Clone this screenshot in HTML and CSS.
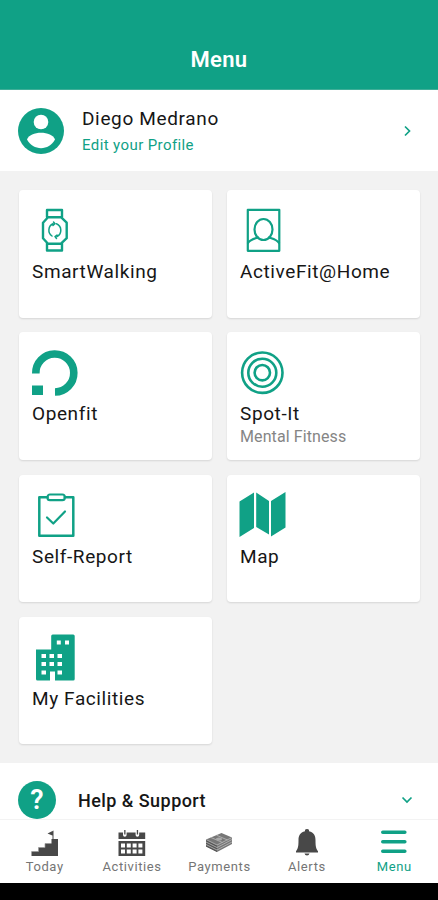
FILE: index.html
```html
<!DOCTYPE html>
<html lang="en">
<head>
    <meta charset="UTF-8">
    <meta name="viewport" content="width=device-width, initial-scale=1.0">
    <title>Menu</title>
    <link rel="stylesheet" href="styles.css">
</head>
<body>
    <header class="header"><h1>Menu</h1></header>

    <a class="profile">
        <svg class="avatar" viewBox="0 0 46 46">
            <circle cx="23" cy="23" r="23" fill="#10a186"/>
            <circle cx="23" cy="14" r="7.3" fill="#fff"/>
            <path d="M9 31.500C12 22.500 34 22.500 37 31.500C31 43 15 43 9 31.500z" fill="#fff"/>
        </svg>
        <div class="profile-text">
            <div class="name">Diego Medrano</div>
            <div class="edit">Edit your Profile</div>
        </div>
        <svg class="chevron" viewBox="0 0 12 12"><path d="M4 1.500l4.500 4.500L4 10.500"/></svg>
    </a>

    <main class="grid">
        <div class="card">
            <svg class="icon line" viewBox="0 0 46 46">
                <path d="M15 9V2h15v7M15 35.500v7h15v-7" stroke-width="2.400"/>
                <path d="M16 9.200h13l5.700 5.500v15.500L29 35.700H16l-5-5.500V14.700z" stroke-width="2.400"/>
                <path d="M21 15.800A7 7 0 0 0 20 28M24.500 15.800A7 7 0 0 1 25 28.500M21.500 14l1.500 1.800-2 1.700M24.500 30.500l-1.500-2 2-1.500" stroke-width="1.500"/>
            </svg>
            <div class="title">SmartWalking</div>
        </div>
        <div class="card">
            <svg class="icon line" viewBox="0 0 46 46">
                <rect x="7.800" y="1.800" width="31.500" height="41" stroke-width="2.200"/>
                <ellipse cx="23.500" cy="21.500" rx="9" ry="10.500" stroke-width="2.200"/>
                <path d="M8 35c2-3.500 5-4 10-5.500M39 35c-2-3.500-5-4-10-5.500" stroke-width="2.200"/>
            </svg>
            <div class="title">ActiveFit@Home</div>
        </div>
        <div class="card">
            <svg class="icon" viewBox="0 0 46 46">
                <path d="M3.800 23.500A19 19 0 1 1 23 42" fill="none" stroke="#10a186" stroke-width="7.600"/>
                <rect x="0" y="35.500" width="11" height="9.500"/>
            </svg>
            <div class="title">Openfit</div>
        </div>
        <div class="card">
            <svg class="icon line" viewBox="0 0 46 46" stroke-width="2.600">
                <circle cx="22.300" cy="22.700" r="20.200"/>
                <circle cx="22.300" cy="22.700" r="14"/>
                <circle cx="22.300" cy="22.700" r="7.700"/>
            </svg>
            <div class="title">Spot-It</div>
            <div class="subtitle">Mental Fitness</div>
        </div>
        <div class="card">
            <svg class="icon line" viewBox="0 0 46 46">
                <path d="M15.500 4.200H7.300v38.600h34V4.200h-8.500" stroke-width="2.500"/>
                <rect x="15.500" y="1.500" width="17.300" height="5.700" rx="2.500" stroke-width="2.200"/>
                <path d="M15 24.500l6.300 6L33 18.500" stroke-width="2.200"/>
            </svg>
            <div class="title">Self-Report</div>
        </div>
        <div class="card">
            <svg class="icon" viewBox="0 0 46 46">
                <path d="M-.5 8.500L14 -.5v35.500L-.5 44zM16.200 -.5l12.800 8.500v33.500L16.200 34zM31 8L45.500 -1v35.500L31 43.500z"/>
            </svg>
            <div class="title">Map</div>
        </div>
        <div class="card">
            <svg class="icon" viewBox="0 0 46 46">
                <path d="M4 14.500h15.200V1q0-1.500 1.500-1.500h20.500q1.500 0 1.500 1.500v43q0 1.500-1.500 1.500H23v-9h-5v9H5.500Q4 45.500 4 44z"/>
                <path fill="#fff" d="M24.800 5.500h4v4h-4zM33 5.500h4v4h-4zM9.500 19h4.500v4H9.500zM17.500 19h4.500v4h-4.500zM25.500 19h4.500v4h-4.500zM9.500 27h4.500v4H9.500zM17.500 27h4.500v4h-4.500zM25.500 27h4.500v4h-4.500zM9.500 35.500h4.500v4H9.500zM25.500 35.500h4.500v4h-4.500z"/>
            </svg>
            <div class="title">My Facilities</div>
        </div>
    </main>

    <section class="help">
        <div class="help-icon">?</div>
        <div class="help-text">Help &amp; Support</div>
        <svg class="chevron" viewBox="0 0 12 12"><path d="M1.500 3.500L6 8l4.500-4.500"/></svg>
    </section>

    <nav class="tabs">
        <a class="tab">
            <svg viewBox="0 0 30 30">
                <path d="M1.500 22.500h7v-4H15v-4h6.500v-4.500h1V2h1v8H28v17H1.500zM17.500 4.500l6-3v5.500z"/>
                <path d="M1.500 22.500h7v-4H15v-4h6" fill="none" stroke="#999" stroke-width=".7"/>
            </svg>
            <span>Today</span>
        </a>
        <a class="tab">
            <svg viewBox="0 0 30 30">
                <path d="M1.500 3.500H6V6a1.800 1.800 0 0 0 3.600 0V3.500h9V6a1.800 1.800 0 0 0 3.600 0V3.500h6V10H1.500zM7.200 1h1.300v4.500H7.200zM19.800 1h1.300v4.500h-1.300z"/>
                <path fill-rule="evenodd" d="M1.500 12h26.700v15H1.500zM4 14.500v4h4v-4zM9.800 14.500v4h4v-4zM15.600 14.500v4h4v-4zM21.400 14.500v4h4v-4zM4 20.500v4h4v-4zM9.800 20.500v4h4v-4zM15.600 20.500v4h4v-4zM21.400 20.500v4h4v-4z"/>
            </svg>
            <span>Activities</span>
        </a>
        <a class="tab">
            <svg viewBox="0 0 30 30">
                <path fill="#777" d="M2 10.500L17.500 4l10.500 4.500v6.500L13 23 2 17.500z"/>
                <path fill="#555" d="M2 10.500l11 5.500v7L2 17.500z"/>
                <path d="M2 10.500L13 16l15-7.500M2 13L13 18.500l15-8M2 15.500l11 5.500 15-8M7 8.500l11.500 5M12.500 6.200l11 4.800" fill="none" stroke="#bbb" stroke-width=".8"/>
                <ellipse cx="15" cy="10" rx="3" ry="1.600" fill="#aaa"/>
            </svg>
            <span>Payments</span>
        </a>
        <a class="tab">
            <svg viewBox="0 0 30 30">
                <path d="M15 0a2 2 0 0 1 2 2.300c5 1.200 6.500 4.500 6.500 9 0 6 .5 8.500 2.500 11v1.200H4v-1.200c2-2.500 2.500-5 2.500-11 0-4.500 1.500-7.800 6.500-9A2 2 0 0 1 15 0zM12.500 24.500h5q-.5 2-2.500 2t-2.500-2z"/>
            </svg>
            <span>Alerts</span>
        </a>
        <a class="tab active">
            <svg viewBox="0 0 30 30">
                <path d="M3.800 3.200h22M3.800 12.700h22M3.800 22.200h22" stroke="#10a186" stroke-width="3.600" stroke-linecap="round"/>
            </svg>
            <span>Menu</span>
        </a>
    </nav>
    <div class="system-bar"></div>
</body>
</html>
```
FILE: styles.css
```css
* {
    box-sizing: border-box;
}
body {
    margin: 0;
    height: 900px;
    display: flex;
    flex-direction: column;
    overflow: hidden;
    font-family: Roboto, sans-serif;
    background-color: #f2f2f2;
    color: #161616;
}
svg {
    display: block;
    overflow: visible;
}
.header {
    height: 90px;
    padding-top: 46px;
    background-color: #10a186;
    border-bottom: 1px solid #3fae98;
    text-align: center;
}
.header h1 {
    margin: 0;
    font-size: 22px;
    line-height: 28px;
    font-weight: 600;
    letter-spacing: 0.3px;
    color: white;
}
.profile {
    display: flex;
    align-items: center;
    height: 81px;
    padding: 0 25px 0 18px;
    background-color: white;
}
.avatar {
    width: 46px;
    height: 46px;
    margin-right: 18px;
}
.profile-text {
    flex: 1;
    padding-top: 3px;
}
.name {
    font-size: 19px;
    line-height: 26px;
    letter-spacing: 0.65px;
}
.edit {
    font-size: 15px;
    line-height: 26px;
    letter-spacing: 0.4px;
    color: #10a186;
}
.chevron {
    width: 12px;
    height: 12px;
    fill: none;
    stroke: #10a186;
    stroke-width: 1.7;
}
.grid {
    display: grid;
    grid-template-columns: 193px 193px;
    grid-auto-rows: 127.500px;
    gap: 14.800px 15px;
    height: 592px;
    padding: 19px;
}
.card {
    padding: 18px 13px;
    background-color: white;
    border-radius: 4px;
    box-shadow: 0 1px 2px rgba(0, 0, 0, 0.12);
}
.icon {
    width: 46px;
    height: 46px;
    fill: #10a186;
}
.line {
    fill: none;
    stroke: #10a186;
    stroke-linejoin: round;
    stroke-linecap: round;
}
.title {
    margin-top: 6px;
    font-size: 19px;
    line-height: 24px;
    letter-spacing: 0.6px;
    white-space: nowrap;
}
.subtitle {
    font-size: 16px;
    line-height: 22px;
    letter-spacing: 0.1px;
    color: #858585;
}
.help {
    display: flex;
    align-items: center;
    height: 56px;
    padding: 17px 25px 0 18px;
    background-color: white;
}
.help-icon {
    width: 38px;
    height: 38px;
    margin-right: 22px;
    border-radius: 50%;
    background-color: #10a186;
    color: white;
    font-size: 27px;
    font-weight: 600;
    line-height: 39px;
    text-align: center;
}
.help-text {
    flex: 1;
    padding-top: 1px;
    font-size: 18px;
    font-weight: 500;
    letter-spacing: 0.45px;
}
.tabs {
    display: grid;
    grid-template-columns: repeat(5, 1fr);
    height: 64px;
    padding: 9px 0 0 1px;
    background-color: white;
    border-top: 1px solid #f3f3f3;
}
.tab {
    display: flex;
    flex-direction: column;
    align-items: center;
    font-size: 13px;
    line-height: 16px;
    letter-spacing: 0.6px;
    color: #757575;
}
.tab svg {
    width: 30px;
    height: 30px;
    fill: #484848;
}
.active {
    color: #10a186;
}
.system-bar {
    height: 17px;
    background-color: black;
}
```
